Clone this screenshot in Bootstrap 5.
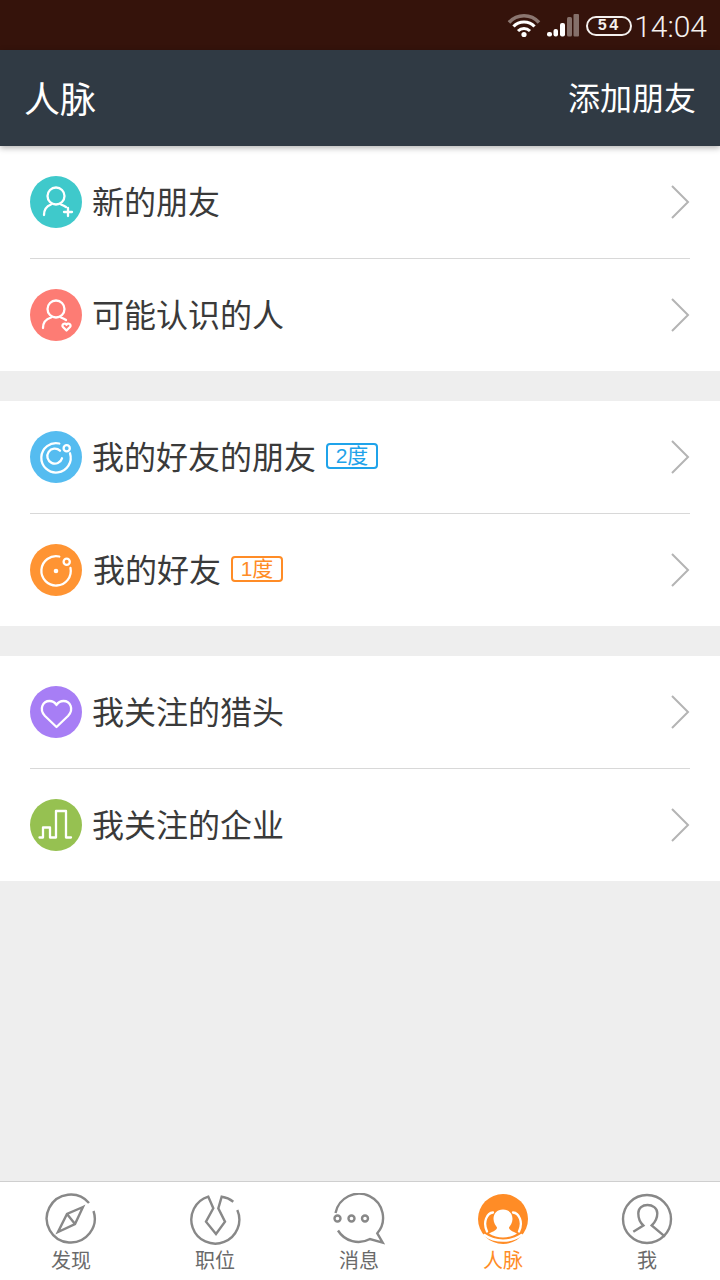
<!DOCTYPE html>
<html lang="zh">
<head>
<meta charset="utf-8">
<link rel="stylesheet" href="https://cdn.jsdelivr.net/npm/bootstrap@5.3.0/dist/css/bootstrap.min.css">
<style>
html,body{margin:0;background:#eee;}
body{font-family:"Noto Sans CJK SC","Liberation Sans",sans-serif;width:720px;height:1280px;overflow:hidden;}
.screen{height:1280px;}
.statusbar{height:50px;background:#35130b;color:#f4f0ee;padding-right:13px;}
.clock{font-family:"Roboto",sans-serif;font-weight:300;font-size:30px;line-height:50px;margin-left:2px;margin-top:3px;}
.batt{width:46px;height:20px;border:2px solid #f4f0ee;border-radius:10px;font-family:"Liberation Mono",monospace;font-weight:700;font-size:16px;line-height:16px;letter-spacing:2px;margin-left:6px;margin-top:1px;}
.sig-wifi{display:block;margin-right:5px;}
.appbar{height:96px;background:#303a44;color:#fff;padding:0 24px;box-shadow:0 2px 6px rgba(0,0,0,.3);position:relative;z-index:2;}
.appbar-title{font-size:36px;line-height:50px;margin-top:-2px;}
.appbar-action{font-size:32px;line-height:50px;margin-top:-4px;}
.group-box{background:#fff;margin-bottom:30px;}
.group-row{height:112px;padding:0 30px;color:#3a3a3a;font-size:32px;line-height:46px;}
.lbl{margin-top:-4px;}
.group-sep{height:1px;background:#d8d8d8;margin:0 30px;}
.ico{width:52px;height:52px;flex:none;margin-right:10px;display:block;}
.ico-wide{margin-right:11px;}
.chev{width:20px;height:36px;display:block;}
.deg{font-size:21px;line-height:22px;height:26px;width:52px;border:2px solid;border-radius:4px;margin-left:10px;margin-top:-2px;text-align:center;font-family:"Liberation Sans","Noto Sans CJK SC",sans-serif;}
.deg-blue{color:#1fa3ea;border-color:#1fa3ea;}
.deg-orange{color:#ff8c26;border-color:#ff8c26;}
.tabbar{height:99px;background:#fff;border-top:1px solid #cfcfcf;}
.tabcell{width:144px;padding:11px 2px 0 0;color:#6a6a6a;font-size:20px;line-height:28px;}
.tabcell svg{display:block;width:52px;height:52px;margin-bottom:1px;}
.tab-on{color:#ff8c26;}
.ln{fill:none;stroke:#fff;stroke-width:2.300;stroke-linecap:round;stroke-linejoin:round;}
.tl{fill:none;stroke:#888;stroke-width:2.400;stroke-linejoin:miter;}
</style>
</head>
<body>
<div class="screen d-flex flex-column">
  <div class="statusbar d-flex justify-content-end align-items-center">
    <svg class="sig-wifi" width="34" height="26" viewBox="0 0 34 26">
      <path d="M2 10.500C10 1.500 24 1.500 32 10.500" fill="none" stroke="#8b7670" stroke-width="3.400"/>
      <path d="M6.500 14.500C12 8.500 22 8.500 27.500 14.500" fill="none" stroke="#fff" stroke-width="3.200"/>
      <path d="M11 19C14.500 15.500 19.500 15.500 23 19" fill="none" stroke="#fff" stroke-width="3"/>
      <circle cx="17" cy="22.500" r="2.600" fill="#fff"/>
    </svg>
    <svg width="34" height="26" viewBox="0 0 34 26">
      <rect x="1" y="20" width="5" height="4.500" rx="2" fill="#fff"/>
      <rect x="7.500" y="17" width="4.500" height="7.500" rx="2" fill="#fff"/>
      <rect x="14" y="11" width="5" height="13.500" rx="2" fill="#fff"/>
      <rect x="21" y="5" width="5" height="19.500" rx="1.500" fill="#85706a"/>
      <rect x="27.500" y="2" width="5.500" height="22.500" rx="1" fill="#85706a"/>
    </svg>
    <div class="batt d-flex justify-content-center align-items-center">54</div>
    <div class="clock">14:04</div>
  </div>
  <div class="appbar d-flex justify-content-between align-items-center">
    <div class="appbar-title">人脉</div>
    <div class="appbar-action">添加朋友</div>
  </div>
  <div class="flex-grow-1">
    <div class="group-box">
      <div class="group-row d-flex align-items-center">
        <svg class="ico" viewBox="0 0 52 52"><circle cx="26" cy="26" r="26" fill="#3fc9cb"/><circle class="ln" cx="26" cy="20" r="8.500"/><path class="ln" d="M14 39C14 33 17 30 21 28.500M31 28.500C33 29.300 34.500 30 36 31"/><path class="ln" d="M38 32V40M34 36H42"/></svg>
        <span class="lbl">新的朋友</span>
        <svg class="chev ms-auto" viewBox="0 0 20 36"><path d="M2 2L18 18L2 34" fill="none" stroke="#b4b4b4" stroke-width="2"/></svg>
      </div>
      <div class="group-sep"></div>
      <div class="group-row d-flex align-items-center">
        <svg class="ico" viewBox="0 0 52 52"><circle cx="26" cy="26" r="26" fill="#fd7c74"/><circle class="ln" cx="26" cy="20" r="8.500"/><path class="ln" d="M13 39C13 33 16 30 21 28.500M31 28.500C33 29.300 34.500 30 36 31"/><path class="ln" d="M36.500 41.500L33 38C31 35.500 35 33 36.500 35.800C38 33 42 35.500 40 38Z"/></svg>
        <span class="lbl">可能认识的人</span>
        <svg class="chev ms-auto" viewBox="0 0 20 36"><path d="M2 2L18 18L2 34" fill="none" stroke="#b4b4b4" stroke-width="2"/></svg>
      </div>
    </div>
    <div class="group-box">
      <div class="group-row d-flex align-items-center">
        <svg class="ico" viewBox="0 0 52 52"><circle cx="26" cy="26" r="26" fill="#55bcf0"/><path class="ln" d="M29.300 12.500A14.700 14.700 0 1 0 40 22.300"/><path class="ln" d="M30 19.700A7.500 7.500 0 1 0 32 27.300"/><circle class="ln" cx="36.700" cy="17.300" r="3.100"/></svg>
        <span class="lbl">我的好友的朋友</span>
        <span class="deg deg-blue">2度</span>
        <svg class="chev ms-auto" viewBox="0 0 20 36"><path d="M2 2L18 18L2 34" fill="none" stroke="#b4b4b4" stroke-width="2"/></svg>
      </div>
      <div class="group-sep"></div>
      <div class="group-row d-flex align-items-center">
        <svg class="ico ico-wide" viewBox="0 0 52 52"><circle cx="26" cy="26" r="26" fill="#ff9433"/><path class="ln" d="M29.300 12.500A14.700 14.700 0 1 0 40.500 24"/><circle cx="26" cy="27" r="2.300" fill="#fff"/><circle class="ln" cx="36.700" cy="17.700" r="3.100"/></svg>
        <span class="lbl">我的好友</span>
        <span class="deg deg-orange">1度</span>
        <svg class="chev ms-auto" viewBox="0 0 20 36"><path d="M2 2L18 18L2 34" fill="none" stroke="#b4b4b4" stroke-width="2"/></svg>
      </div>
    </div>
    <div class="group-box mb-0">
      <div class="group-row d-flex align-items-center">
        <svg class="ico" viewBox="0 0 52 52"><circle cx="26" cy="26" r="26" fill="#a77ef5"/><path class="ln" d="M26.500 41L15 30C8.500 23 13 15 19.500 15C22.500 15 25 16.500 26.500 19C28 16.500 30.500 15 33.500 15C40 15 44.500 23 38 30Z"/></svg>
        <span class="lbl">我关注的猎头</span>
        <svg class="chev ms-auto" viewBox="0 0 20 36"><path d="M2 2L18 18L2 34" fill="none" stroke="#b4b4b4" stroke-width="2"/></svg>
      </div>
      <div class="group-sep"></div>
      <div class="group-row d-flex align-items-center">
        <svg class="ico" viewBox="0 0 52 52"><circle cx="26" cy="26" r="26" fill="#96c151"/><path class="ln" d="M9.500 38.500H13V28.500H20V38.500H26V12H36V38.500H41" stroke-linecap="butt" stroke-linejoin="miter"/></svg>
        <span class="lbl">我关注的企业</span>
        <svg class="chev ms-auto" viewBox="0 0 20 36"><path d="M2 2L18 18L2 34" fill="none" stroke="#b4b4b4" stroke-width="2"/></svg>
      </div>
    </div>
  </div>
  <div class="tabbar d-flex">
    <div class="tabcell d-flex flex-column align-items-center">
      <svg viewBox="0 0 52 52"><path class="tl" d="M44 10A24 24 0 1 0 48.500 18"/><path class="tl" d="M38 14L22 21L13 39L30 31ZM22 21L30 31"/></svg>
      <span>发现</span>
    </div>
    <div class="tabcell d-flex flex-column align-items-center">
      <svg viewBox="0 0 52 52"><path class="tl" d="M48.300 17A24 24 0 1 1 19.300 3.700L24.300 15.300L17 28.700L27 41L36 28.700L29.300 15.300L32.700 3.700A24 24 0 0 1 44.300 8.700"/></svg>
      <span>职位</span>
    </div>
    <div class="tabcell d-flex flex-column align-items-center">
      <svg viewBox="0 0 52 52"><path class="tl" d="M2.500 20A24 24 0 1 1 44.300 40.300L49.700 49.700L37 46A24 24 0 0 1 5 37.500"/><circle class="tl" cx="4.500" cy="25.500" r="3"/><circle class="tl" cx="18.500" cy="25.500" r="3"/><circle class="tl" cx="32" cy="25.500" r="3"/></svg>
      <span>消息</span>
    </div>
    <div class="tabcell tab-on d-flex flex-column align-items-center">
      <svg viewBox="0 0 52 52"><circle cx="26" cy="26" r="25" fill="#ff8c26"/><path fill="#fff" d="M26 16.500C20 16.500 16.500 20.500 16.500 26C16.500 30 19 33 20 34.500C20 37 16 38.500 12 40.500C16 43 21 44.500 26 44.500C31 44.500 36 43 40 40.500C36 38.500 32 37 32 34.500C33 33 35.500 30 35.500 26C35.500 20.500 32 16.500 26 16.500Z"/><path class="ln" d="M16 19.500C10 20 5.500 29 10 38.500M36 19.500C42 20 46.500 29 42 38.500"/><path class="ln" d="M7.500 42C18 49.500 34 49.500 44.500 42"/></svg>
      <span>人脉</span>
    </div>
    <div class="tabcell d-flex flex-column align-items-center">
      <svg viewBox="0 0 52 52"><circle class="tl" cx="26" cy="26" r="24"/><path class="tl" d="M12.300 38.700L22.300 32.500C18.500 29 17.300 24 17.300 20.300C17.300 15 21.500 12 26.500 12C31.500 12 36.300 15 36.300 20.300C36.300 24 34.500 29 30.700 32.500L44 43.700"/></svg>
      <span>我</span>
    </div>
  </div>
</div>
</body>
</html>
